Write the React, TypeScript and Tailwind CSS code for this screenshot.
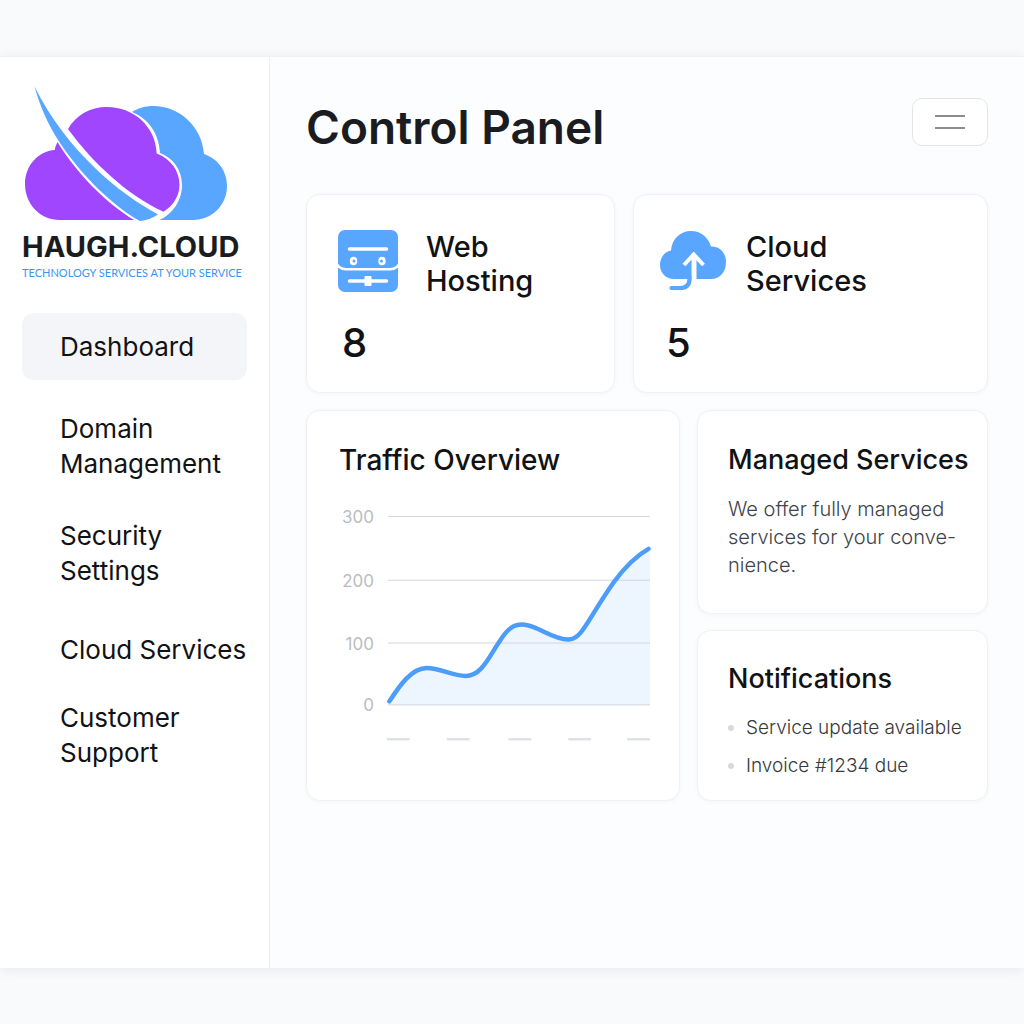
import type { ReactNode } from "react";
import clsx from "clsx";

const navItems = [
  { label: "Dashboard", active: true, className: "py-4" },
  { label: "Domain Management", className: "mt-[31px]" },
  { label: "Security Settings", className: "mt-[37px]" },
  { label: "Cloud Services", className: "mt-11 whitespace-nowrap" },
  { label: "Customer Support", className: "mt-[33px]" },
];

const notifications = ["Service update available", "Invoice #1234 due"];

const gridLines = [
  { value: 300, y: 11.5 },
  { value: 200, y: 75.5 },
  { value: 100, y: 138.5 },
  { value: 0, y: 200.5 },
];

const ticks = [47, 107, 169, 229, 288];

const curve =
  "M49.5 197C60 181 72 163.5 87 163.5C101 163.5 112 171.5 126 171.5C142 171.5 149 153 160 137C168 124 174 120 183 120C197 120 213 135 229 135C243 135 248 115 275 77C289 58 299 50 309.5 44";

const Logo = () => (
  <svg viewBox="0 0 206 138" className="w-[206px]" aria-hidden="true">
    {/* back cloud */}
    <path
      fill="#58a6ff"
      d="M110 28C116 24 124 22 131 22C158 22 180 43 182 70C196 75 205 87 205 102C205 121 190 136 171 136H137.500C151 130 160 116 160 101C160 86 151 74 138 69C137 50 127 35 110 28Z"
    />
    {/* front cloud, split in two by the swoosh */}
    <path
      fill="#a046ff"
      d="M46 45C54 31 68 23 85 23C112 23 134 43 134.700 69.500C149 75 157.500 87 157.500 101C157.500 112 151 122 141.500 127.700C105 111 71 79 46 45Z"
    />
    <path
      fill="#a046ff"
      d="M35.500 58C34 61 33 63.500 32.800 66C16 67 3 82 3 100C3 120 18 136 38 136H112C84 119 56 91 35.500 58Z"
    />
    <path
      fill="#58a6ff"
      d="M12.500 2.500C28 34 49 61 74 85C95 105 114 118 136 130.500C130 134 125 136.500 118 137C92 123 60 92 38 59C25 39 18 22 12.500 2.500Z"
    />
  </svg>
);

const ServerIcon = () => (
  <svg viewBox="0 0 60 62" className="w-[60px] shrink-0" aria-hidden="true">
    <rect width="60" height="62" rx="7" fill="#58a6ff" />
    <path
      d="M-1 34.500C1 38 4 39.200 8 39.200H52C56 39.200 59 38 61 34.500"
      fill="none"
      stroke="#fff"
      strokeWidth="2.600"
    />
    <path
      d="M11.500 19H48.500M11.500 51H48.500"
      stroke="#fff"
      strokeWidth="3.600"
      strokeLinecap="round"
    />
    <rect x="26.500" y="46" width="7" height="10" rx="1" fill="#fff" />
    <ellipse cx="15.500" cy="31" rx="3.700" ry="4.300" fill="#fff" />
    <ellipse cx="44" cy="31" rx="3.700" ry="4.300" fill="#fff" />
    <circle cx="16" cy="31" r="1.500" fill="#58a6ff" />
    <circle cx="43.500" cy="31" r="1.500" fill="#58a6ff" />
  </svg>
);

const CloudUploadIcon = () => (
  <svg viewBox="0 0 66 62" className="w-[66px] shrink-0" aria-hidden="true">
    <path
      fill="#58a6ff"
      d="M14 49C6 49 0 43 0 35C0 28 4 22 11 20.500C12 9 20 1 31 1C41 1 48 7 51 16.500C60 16 66 23 66 32C66 42 60 49 51 49Z"
    />
    <path d="M34 25V50" stroke="#fff" strokeWidth="5" />
    <path
      d="M24 35L33.700 24.500L43.500 35"
      fill="none"
      stroke="#fff"
      strokeWidth="4"
    />
    <path
      d="M29.500 47V49C29.500 55.500 26 58 20 58H11.500"
      fill="none"
      stroke="#58a6ff"
      strokeWidth="4.200"
      strokeLinecap="round"
    />
  </svg>
);

const Card = ({
  children,
  className,
}: {
  children: ReactNode;
  className?: string;
}) => (
  <section
    className={clsx(
      "rounded-[14px] border border-[#f0f1f4] bg-white shadow-[0_1px_4px_rgba(30,40,60,0.04)]",
      className
    )}
  >
    {children}
  </section>
);

const TrafficChart = () => (
  <svg
    viewBox="-1 0 313 240"
    className="mt-7 w-full"
    role="img"
    aria-label="Traffic Overview"
  >
    <path d={`${curve}L311 44V200.500H49.500Z`} fill="#edf5ff" />
    {gridLines.map((line) => (
      <g key={line.value}>
        <text
          x="34"
          y={line.y + 6.5}
          textAnchor="end"
          className="fill-[#b8bdc4] text-[17px]"
        >
          {line.value}
        </text>
        <path d={`M48 ${line.y}H311`} stroke="#d3d7dd" />
      </g>
    ))}
    <path
      d={curve}
      fill="none"
      stroke="#4b9df9"
      strokeWidth="4.500"
      strokeLinecap="round"
    />
    {ticks.map((x) => (
      <path key={x} d={`M${x} 235h23`} stroke="#dee2e7" strokeWidth="2.500" />
    ))}
  </svg>
);

const App = () => {
  return (
    <div className="flex min-h-screen flex-col bg-[#f9fafc] py-14 font-['Inter',sans-serif] text-[#111214]">
      <div className="flex flex-1 border-t border-[#f0f1f3] bg-[#fcfdfe] shadow-[0_2px_12px_rgba(30,40,60,0.08)]">
        {/* Sidebar */}
        <aside className="w-[270px] shrink-0 border-r border-[#eceef1] bg-white px-[22px] pt-[27px]">
          <Logo />
          <p className="mt-[11px] text-[29px] leading-7 font-bold whitespace-nowrap text-[#1b1c1f]">
            HAUGH.CLOUD
          </p>
          <p className="mt-1 font-['Lato',sans-serif] text-[11px] leading-4 whitespace-nowrap text-[#3b94f5]">
            TECHNOLOGY SERVICES AT YOUR SERVICE
          </p>

          <nav className="mt-8 flex flex-col">
            {navItems.map((item) => (
              <a
                key={item.label}
                href="#"
                aria-current={item.active ? "page" : undefined}
                className={clsx(
                  "rounded-xl pl-[38px] text-[26px] leading-[35px]",
                  item.active && "bg-[#f3f5f9]",
                  item.className
                )}
              >
                {item.label}
              </a>
            ))}
          </nav>
        </aside>

        <main className="min-w-0 flex-1 px-9 pt-[41px]">
          <header className="mb-12 flex h-12 items-start justify-between">
            <h1 className="text-[46px] leading-[58px] font-semibold text-[#1b1c1f]">
              Control Panel
            </h1>
            <button
              aria-label="Menu"
              className="flex h-12 w-[76px] flex-col items-center justify-center gap-2.5 rounded-[10px] border border-[#e3e5e9] bg-white"
            >
              <span className="h-0.5 w-[30px] bg-[#8b8d91]" />
              <span className="h-0.5 w-[30px] bg-[#8b8d91]" />
            </button>
          </header>

          {/* Service counters */}
          <div className="grid grid-cols-[309fr_355fr] gap-[18px]">
            <Card className="px-[31px] pt-[35px] pb-6">
              <div className="flex items-start gap-7">
                <ServerIcon />
                <h2 className="text-[29px] leading-[34px] font-medium">
                  Web
                  <br />
                  Hosting
                </h2>
              </div>
              <p className="mt-5 pl-1 text-[40px] leading-[50px] font-medium">8</p>
            </Card>
            <Card className="px-[26px] pt-[35px] pb-6">
              <div className="flex items-start gap-5">
                <CloudUploadIcon />
                <h2 className="text-[29px] leading-[34px] font-medium">
                  Cloud
                  <br />
                  Services
                </h2>
              </div>
              <p className="mt-5 pl-1.5 text-[40px] leading-[50px] font-medium">
                5
              </p>
            </Card>
          </div>

          {/* Traffic and side cards */}
          <div className="mt-[17px] grid grid-cols-[374fr_291fr] gap-[17px]">
            <Card className="pt-8 pr-7 pb-14 pl-8">
              <h2 className="text-[28px] leading-[34px] font-medium">
                Traffic Overview
              </h2>
              <TrafficChart />
            </Card>

            <div className="flex flex-col gap-4">
              <Card className="pt-8 pb-[34px] pl-[30px]">
                <h2 className="text-[27px] leading-[34px] font-medium whitespace-nowrap">
                  Managed Services
                </h2>
                <p className="mt-[18px] text-[20px] leading-7 font-light whitespace-nowrap text-[#404348]">
                  We offer fully managed
                  <br />
                  services for your conve-
                  <br />
                  nience.
                </p>
              </Card>
              <Card className="flex-1 pt-[31px] pl-[30px]">
                <h2 className="text-[27px] leading-[34px] font-medium">
                  Notifications
                </h2>
                <ul className="mt-[18px] flex flex-col gap-2.5">
                  {notifications.map((text) => (
                    <li
                      key={text}
                      className="flex items-center gap-3 text-[19px] leading-7 font-light whitespace-nowrap text-[#36383c]"
                    >
                      <span className="size-1.5 shrink-0 rounded-full bg-[#d6d9df]" />
                      {text}
                    </li>
                  ))}
                </ul>
              </Card>
            </div>
          </div>
        </main>
      </div>
    </div>
  );
};

export default App;
